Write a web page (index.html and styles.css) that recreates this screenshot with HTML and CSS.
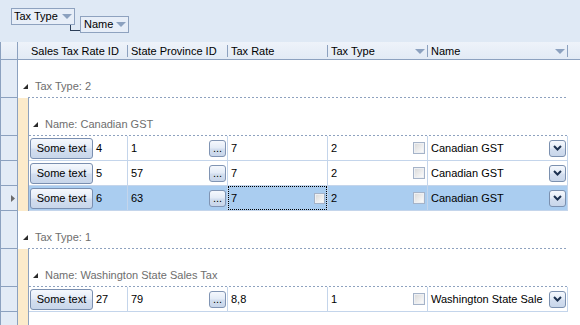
FILE: index.html
```html
<!DOCTYPE html>
<html>
<head>
<meta charset="utf-8">
<link rel="stylesheet" href="styles.css">
</head>
<body>
<div class="panel">
  <div class="chip chip-tax">Tax Type<span class="tri"></span></div>
  <div class="chip chip-name">Name<span class="tri"></span></div>
</div>
<div class="grid">
  <div class="hdr">
    <div class="rh"></div>
    <div class="hc h1">Sales Tax Rate ID</div>
    <div class="hc h2">State Province ID</div>
    <div class="hc h3">Tax Rate</div>
    <div class="hc h4">Tax Type<span class="tri ftri"></span></div>
    <div class="hc h5">Name<span class="tri ftri"></span></div>
  </div>

  <div class="row grp g1">
    <div class="rh"></div>
    <div class="gbody">
      <div class="glabel"><svg class="gtri" width="5" height="5" viewBox="0 0 5 5"><polygon points="5,0 5,5 0,5" fill="#2b2b2b"/></svg>Tax Type: 2</div>
      <div class="dash"></div>
    </div>
  </div>
  <div class="row grp g2">
    <div class="rh"></div>
    <div class="ind"></div>
    <div class="gbody">
      <div class="glabel"><svg class="gtri" width="5" height="5" viewBox="0 0 5 5"><polygon points="5,0 5,5 0,5" fill="#2b2b2b"/></svg>Name: Canadian GST</div>
      <div class="dash"></div>
    </div>
  </div>

  <div class="row drow">
    <div class="rh"></div>
    <div class="ind"></div>
    <div class="dbody">
      <div class="cell ca"><span class="btn">Some text</span><span class="num">4</span></div>
      <div class="cell cb"><span>1</span><span class="ell">...</span></div>
      <div class="cell cc"><span>7</span></div>
      <div class="cell cd"><span>2</span><span class="chk"></span></div>
      <div class="cell ce"><span class="txt">Canadian GST</span><span class="dd"><svg width="9" height="6" viewBox="0 0 9 6"><polyline points="1,1 4.5,4.5 8,1" fill="none" stroke="#1c3150" stroke-width="2"/></svg></span></div>
    </div>
  </div>
  <div class="row drow">
    <div class="rh"></div>
    <div class="ind"></div>
    <div class="dbody">
      <div class="cell ca"><span class="btn">Some text</span><span class="num">5</span></div>
      <div class="cell cb"><span>57</span><span class="ell">...</span></div>
      <div class="cell cc"><span>7</span></div>
      <div class="cell cd"><span>2</span><span class="chk"></span></div>
      <div class="cell ce"><span class="txt">Canadian GST</span><span class="dd"><svg width="9" height="6" viewBox="0 0 9 6"><polyline points="1,1 4.5,4.5 8,1" fill="none" stroke="#1c3150" stroke-width="2"/></svg></span></div>
    </div>
  </div>
  <div class="row drow sel">
    <div class="rh cur"><svg width="4" height="7" viewBox="0 0 4 7"><polygon points="0,0 4,3.5 0,7" fill="#6b6b6b"/></svg></div>
    <div class="ind"></div>
    <div class="dbody">
      <div class="cell ca"><span class="btn">Some text</span><span class="num">6</span></div>
      <div class="cell cb"><span>63</span><span class="ell">...</span></div>
      <div class="cell cc edit"><div class="focus"><span>7</span><span class="chk chk-sm"></span></div></div>
      <div class="cell cd"><span>2</span><span class="chk"></span></div>
      <div class="cell ce"><span class="txt">Canadian GST</span><span class="dd"><svg width="9" height="6" viewBox="0 0 9 6"><polyline points="1,1 4.5,4.5 8,1" fill="none" stroke="#1c3150" stroke-width="2"/></svg></span></div>
    </div>
  </div>

  <div class="row grp g1">
    <div class="rh"></div>
    <div class="gbody">
      <div class="glabel"><svg class="gtri" width="5" height="5" viewBox="0 0 5 5"><polygon points="5,0 5,5 0,5" fill="#2b2b2b"/></svg>Tax Type: 1</div>
      <div class="dash"></div>
    </div>
  </div>
  <div class="row grp g2">
    <div class="rh"></div>
    <div class="ind"></div>
    <div class="gbody">
      <div class="glabel"><svg class="gtri" width="5" height="5" viewBox="0 0 5 5"><polygon points="5,0 5,5 0,5" fill="#2b2b2b"/></svg>Name: Washington State Sales Tax</div>
      <div class="dash"></div>
    </div>
  </div>
  <div class="row drow">
    <div class="rh"></div>
    <div class="ind"></div>
    <div class="dbody">
      <div class="cell ca"><span class="btn">Some text</span><span class="num">27</span></div>
      <div class="cell cb"><span>79</span><span class="ell">...</span></div>
      <div class="cell cc"><span>8,8</span></div>
      <div class="cell cd"><span>1</span><span class="chk"></span></div>
      <div class="cell ce"><span class="txt">Washington State Sale</span><span class="dd"><svg width="9" height="6" viewBox="0 0 9 6"><polyline points="1,1 4.5,4.5 8,1" fill="none" stroke="#1c3150" stroke-width="2"/></svg></span></div>
    </div>
  </div>
  <div class="row fill">
    <div class="rh"></div>
    <div class="ind"></div>
    <div class="fbody"></div>
  </div>
</div>
</body>
</html>
```
FILE: styles.css
```css
html, body {
  margin: 0;
  padding: 0;
}
body {
  width: 580px;
  height: 325px;
  overflow: hidden;
  background: #fff;
  color: #000;
  font-family: "Liberation Sans", Arial, sans-serif;
  font-size: 11px;
  display: flex;
  flex-direction: column;
}

/* group-by panel */
.panel {
  height: 42px;
  flex: none;
  box-sizing: border-box;
  background: #dfe9f5;
  display: flex;
  align-items: flex-start;
  padding: 8px 0 0 11px;
}
.chip {
  position: relative;
  display: flex;
  align-items: center;
  height: 17px;
  box-sizing: border-box;
  border: 1px solid #8ea2bf;
  background: #e7eef8;
  padding: 0 2px 0 2px;
  line-height: 15px;
  white-space: nowrap;
}
.chip-tax { width: 64px; }
.chip-name {
  width: 49px;
  margin-left: 5px;
  margin-top: 8px;
  padding-left: 3px;
}
.chip-tax::after {
  content: "";
  position: absolute;
  left: 58px;
  top: 16px;
  width: 9px;
  height: 5px;
  border-left: 1px solid #2c3e57;
  border-bottom: 1px solid #2c3e57;
}
.tri {
  margin-left: auto;
  width: 0;
  height: 0;
  border-left: 5px solid transparent;
  border-right: 5px solid transparent;
  border-top: 5px solid #8ca1bf;
}

/* grid */
.grid {
  flex: 1;
  display: flex;
  flex-direction: column;
  min-height: 0;
}
.hdr {
  display: flex;
  flex: none;
  height: 18px;
  box-sizing: border-box;
  border-bottom: 1px solid #8ca1bf;
  background: linear-gradient(#eef3fa, #e2eaf5);
}
.hdr .rh {
  border-bottom: none;
  background: transparent;
  height: 17px;
}
.hc {
  height: 12px;
  margin-top: 3px;
  box-sizing: border-box;
  border-right: 1px solid #8ca1bf;
  padding-left: 3px;
  line-height: 12px;
  display: flex;
  align-items: center;
  white-space: nowrap;
}
.h1 { width: 110px; padding-left: 13px; }
.h2, .h3, .h4 { width: 100px; }
.h5 { width: 140px; }
.ftri { margin-right: 2px; }

.row {
  display: flex;
  flex: none;
}
.rh {
  width: 18px;
  flex: none;
  box-sizing: border-box;
  border-left: 1px solid #8ca1bf;
  border-right: 1px solid #8ca1bf;
  border-bottom: 1px solid #8ca1bf;
  background: #e3ebf6;
}
.rh.cur {
  display: flex;
  align-items: center;
  padding-left: 10px;
}
.ind {
  width: 10px;
  flex: none;
  background: #fcebcb;
}

/* group rows */
.grp { height: 38px; }
.gbody {
  display: flex;
  flex-direction: column;
  justify-content: flex-end;
  box-sizing: border-box;
}
.g1 .gbody { width: 550px; }
.g2 .gbody {
  width: 540px;
  border-left: 1px solid #8ea2bf;
}
.glabel {
  display: flex;
  align-items: center;
  height: 14px;
  margin-bottom: 4px;
  color: #6e6e6e;
  white-space: nowrap;
}
.g1 .glabel { padding-left: 5px; }
.g2 .glabel { padding-left: 4px; }
.gtri {
  margin-right: 7px;
  flex: none;
}
.dash {
  height: 1px;
  background: repeating-linear-gradient(90deg, #8ea2bf 0 2px, transparent 2px 4px);
}
.g1 .dash { margin-left: 10px; }

/* data rows */
.drow { height: 25px; }
.dbody {
  width: 540px;
  box-sizing: border-box;
  border-left: 1px solid #8ea2bf;
  display: flex;
}
.cell {
  height: 25px;
  box-sizing: border-box;
  border-right: 1px solid #c4d5eb;
  border-bottom: 1px solid #c4d5eb;
  display: flex;
  align-items: center;
  white-space: nowrap;
}
.sel .cell { background: #aacdf0; }
.ca { width: 99px; padding-left: 1px; }
.cb { width: 100px; padding: 0 1px 0 3px; }
.cc { width: 100px; padding-left: 3px; }
.cd { width: 100px; padding: 0 2px 0 3px; }
.ce { width: 140px; padding: 0 1px 0 3px; }
.cc.edit { padding: 0; }
.focus {
  width: 100%;
  height: 100%;
  box-sizing: border-box;
  border: 1px dotted #000;
  display: flex;
  align-items: center;
  padding: 0 1px 0 2px;
}
.num { margin-left: 3px; }

.btn {
  width: 63px;
  height: 21px;
  box-sizing: border-box;
  border: 1px solid #7a8fb0;
  border-radius: 3px;
  background: linear-gradient(#f5f8fd, #e4ecf7 45%, #d3deef 55%, #c8d6ea);
  display: flex;
  align-items: center;
  justify-content: center;
  line-height: 19px;
}
.ell {
  margin-left: auto;
  width: 17px;
  height: 17px;
  box-sizing: border-box;
  border: 1px solid #8094b3;
  border-radius: 3px;
  background: linear-gradient(#f5f8fd, #e4ecf7 45%, #d3deef 55%, #c8d6ea);
  text-align: center;
  line-height: 14px;
}
.chk {
  margin-left: auto;
  width: 12px;
  height: 12px;
  box-sizing: border-box;
  border: 1px solid #a5b3c8;
  background: linear-gradient(135deg, #d8d8d8, #f3f3f3 70%, #ffffff);
  box-shadow: inset 0 0 0 1px #eef0f3;
}
.chk-sm {
  width: 11px;
  height: 11px;
}
.txt {
  flex: 1;
  min-width: 0;
}
.dd {
  margin-left: 3px;
  width: 17px;
  height: 17px;
  flex: none;
  box-sizing: border-box;
  border: 1px solid #7b90af;
  border-radius: 3px;
  background: linear-gradient(#f5f8fd, #e4ecf7 45%, #d3deef 55%, #c8d6ea);
  display: flex;
  align-items: center;
  justify-content: center;
}

.fill { flex: 1; }
.fill .rh { border-bottom: none; }
.fbody {
  width: 540px;
  box-sizing: border-box;
  border-left: 1px solid #8ea2bf;
}
```
